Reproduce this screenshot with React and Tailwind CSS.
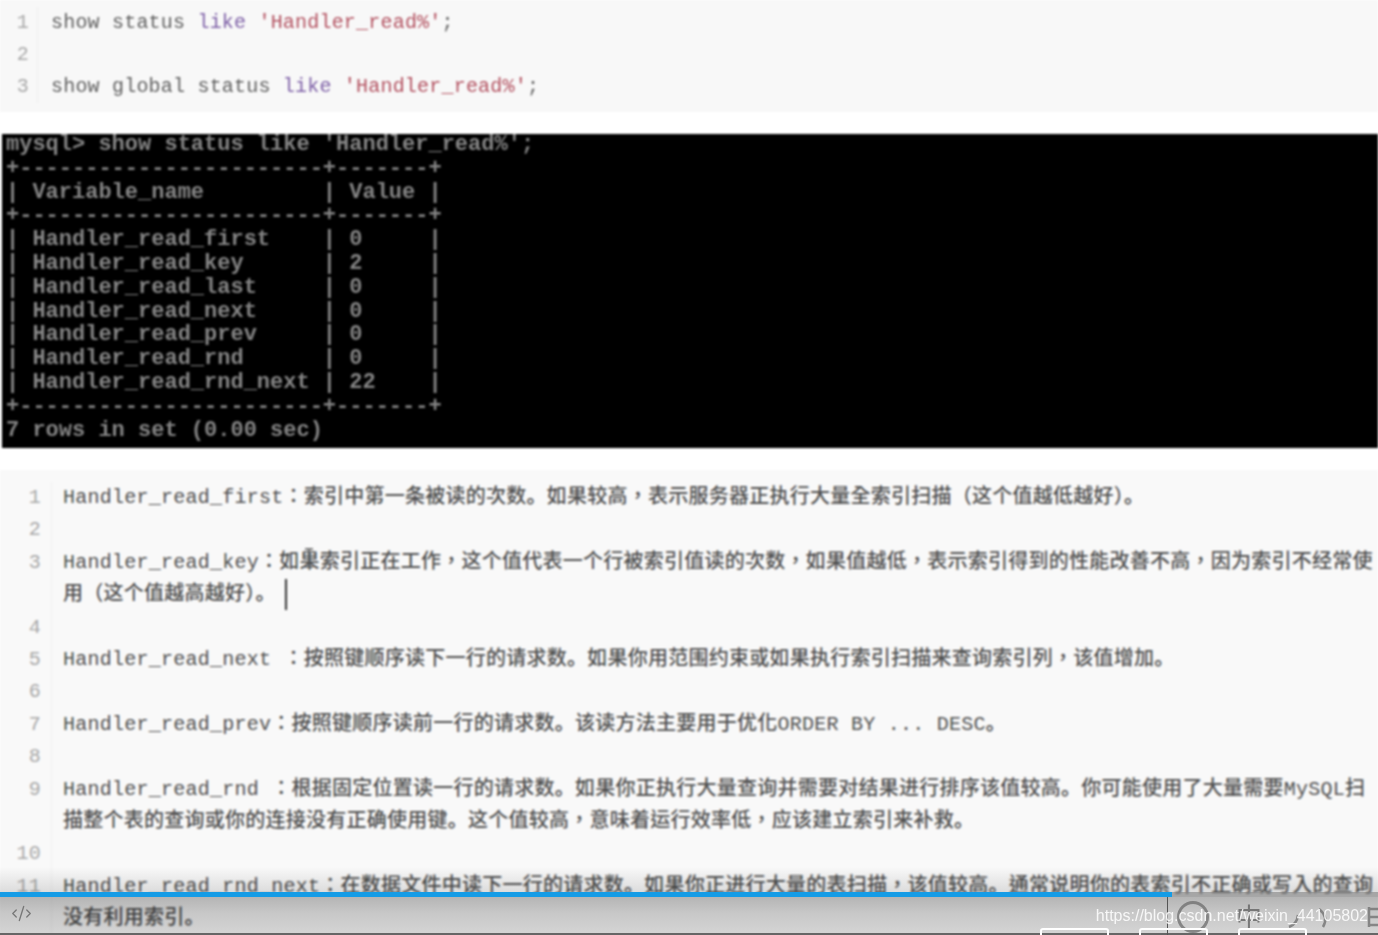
import React from 'react';
import { CodeXml } from 'lucide-react';

const mono = 'font-["Liberation_Mono","Noto_Sans_CJK_TC",monospace]';

const terminalLines = [
  "mysql> show status like 'Handler_read%';",
  '+-----------------------+-------+',
  '| Variable_name         | Value |',
  '+-----------------------+-------+',
  '| Handler_read_first    | 0     |',
  '| Handler_read_key      | 2     |',
  '| Handler_read_last     | 0     |',
  '| Handler_read_next     | 0     |',
  '| Handler_read_prev     | 0     |',
  '| Handler_read_rnd      | 0     |',
  '| Handler_read_rnd_next | 22    |',
  '+-----------------------+-------+',
  '7 rows in set (0.00 sec)',
];

const notes = [
  { n: 1, text: 'Handler_read_first：索引中第一条被读的次数。如果较高，表示服务器正执行大量全索引扫描（这个值越低越好）。' },
  { n: 2, text: '' },
  { n: 3, text: 'Handler_read_key：如果索引正在工作，这个值代表一个行被索引值读的次数，如果值越低，表示索引得到的性能改善不高，因为索引不经常使' },
  { text: '用（这个值越高越好）。', caret: true },
  { n: 4, text: '' },
  { n: 5, text: 'Handler_read_next ：按照键顺序读下一行的请求数。如果你用范围约束或如果执行索引扫描来查询索引列，该值增加。' },
  { n: 6, text: '' },
  { n: 7, text: 'Handler_read_prev：按照键顺序读前一行的请求数。该读方法主要用于优化ORDER BY ... DESC。' },
  { n: 8, text: '' },
  { n: 9, text: 'Handler_read_rnd ：根据固定位置读一行的请求数。如果你正执行大量查询并需要对结果进行排序该值较高。你可能使用了大量需要MySQL扫' },
  { text: '描整个表的查询或你的连接没有正确使用键。这个值较高，意味着运行效率低，应该建立索引来补救。' },
  { n: 10, text: '' },
  { n: 11, text: 'Handler_read_rnd_next：在数据文件中读下一行的请求数。如果你正进行大量的表扫描，该值较高。通常说明你的表索引不正确或写入的查询' },
  { text: '没有利用索引。' },
];

const Query = ({ before, string }) => (
  <>
    <span className="text-[#5f5f5f]">{before} </span>
    <span className="text-[#7d5fa6]">like</span>{' '}
    <span className="text-[#b2505f]">{string}</span>
    <span className="text-[#5f5f5f]">;</span>
  </>
);

// the full stop sits low and left in the picture, the other marks are centred
const NoteText = ({ text }) => (
  <span>
    {text.split(/(。)/).map((part, i) =>
      part === '。' ? (
        <span key={i} className="font-['Noto_Sans_CJK_SC',sans-serif] leading-[0] font-bold">
          {part}
        </span>
      ) : (
        part
      )
    )}
  </span>
);

const App = () => {
  return (
    <div className="relative h-[935px] w-[1378px] overflow-hidden bg-white">
      <div className="blur-[0.9px]">
        {/* SQL snippet */}
        <div className={`flex h-[112px] bg-[#f8f8f8] pt-[7px] text-[20px] leading-[32px] tracking-[0.2px] ${mono}`}>
          <div className="h-[96px] w-[38px] border-r border-[#eeeeee] pr-[8px] text-right text-[#a8a8a8]">
            <div>1</div>
            <div>2</div>
            <div>3</div>
          </div>
          <div className="pl-[13px] whitespace-pre">
            <div>
              <Query before="show status" string="'Handler_read%'" />
            </div>
            <div>&nbsp;</div>
            <div>
              <Query before="show global status" string="'Handler_read%'" />
            </div>
          </div>
        </div>

        {/* Terminal output */}
        <div className="mt-[22px] ml-[2px] h-[314px] overflow-hidden bg-black pl-[4px]">
          <pre className={`-mt-[1px] text-[22px] leading-[23.8px] font-bold text-[#858585] ${mono}`}>
            {terminalLines.join('\n')}
          </pre>
        </div>

        {/* Explanation notes */}
        <div className={`relative mt-[22px] h-[465px] bg-[#f9f9f9] pt-[12px] text-[20px] leading-[32.4px] tracking-[0.25px] ${mono}`}>
          {notes.map((row, i) => (
            <div key={i} className="flex h-[32.4px]">
              <div className="w-[52px] shrink-0 border-r border-[#f0f0f0] pr-[10px] text-right text-[#a8a8a8]">
                {row.n}
              </div>
              <div className="flex pl-[11px] font-medium whitespace-pre text-[#505050]">
                <NoteText text={row.text} />
                {row.caret && <span className="ml-[9px] h-[31px] w-[2px] bg-[#333333]" />}
              </div>
            </div>
          ))}
          {/* mouse pointer */}
          <svg className="absolute top-[78px] left-[303px]" width="12" height="20" viewBox="0 0 12 20" fill="none" stroke="#555555" strokeWidth="1.5">
            <path d="M2 1h8M6 1v18M2 19h8" />
          </svg>
        </div>
      </div>

      {/* Video player controls on top of the page */}
      <div className="absolute inset-x-0 bottom-[43px] h-[25px] bg-gradient-to-b from-white to-[#e2e2e2] mix-blend-multiply" />
      <div className="absolute inset-x-0 bottom-0 h-[43px] bg-gradient-to-b from-[#b4b4b4] via-[#cdcdcd] to-[#dadada] mix-blend-multiply" />
      <div className="absolute inset-x-0 bottom-0 h-[2px] bg-[#666666]" />
      <div className="absolute inset-x-0 bottom-[38px] h-[5px] bg-[#999999]/50">
        <div className="h-full w-[1172px] bg-[#159ce6]" />
      </div>
      <CodeXml className="absolute bottom-[11px] left-[11px] text-[#777777]" size={21} strokeWidth={1.5} />
      <div className="absolute right-[210px] bottom-0 h-[38px] w-px bg-[#555555]" />
      <div className="absolute bottom-[2px] left-[1177px] size-[32px] rounded-full border-[3px] border-[#666666]/70 blur-[0.6px]" />
      <div className="absolute bottom-[2px] left-[1236px] font-['Noto_Sans_CJK_SC',sans-serif] text-[26px] leading-[34px] text-[#555555]/70 blur-[0.6px]">中</div>
      <svg className="absolute bottom-[4px] left-[1285px] blur-[0.6px]" width="93" height="30" viewBox="0 0 93 30" fill="none" stroke="#666666" strokeWidth="2.5" strokeOpacity="0.7">
        <path d="M4 26q8-3 9-12M34 8q10 8 4 18M84 8h9M84 16h9M84 24h9M84 6v20" />
      </svg>
      <div className="absolute bottom-[-6px] left-[1040px] flex gap-[30px]">
        <div className="h-[13px] w-[69px] rounded-[3px] border-2 border-white" />
        <div className="h-[13px] w-[69px] rounded-[3px] border-2 border-white" />
        <div className="h-[13px] w-[69px] rounded-[3px] border-2 border-white" />
      </div>
      <div className="absolute right-[10px] bottom-[7px] font-['Liberation_Sans',sans-serif] text-[16px] leading-[24px] text-white/85">
        https://blog.csdn.net/weixin_44105802
      </div>
    </div>
  );
};

export default App;
